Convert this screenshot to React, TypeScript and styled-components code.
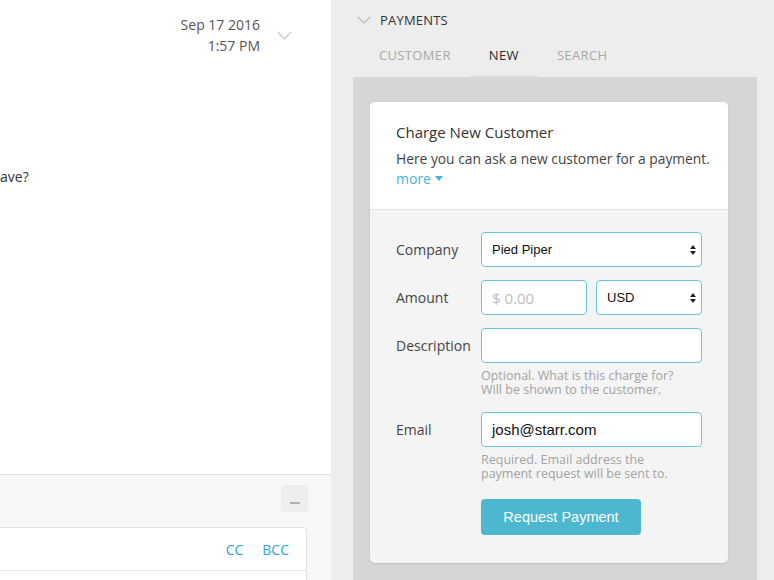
import styled, { createGlobalStyle } from 'styled-components';

const GlobalStyle = createGlobalStyle`
  html, body {
    margin: 0;
    padding: 0;
  }
  body {
    font-family: 'Open Sans', 'Liberation Sans', sans-serif;
    background: #ededed;
    overflow: hidden;
  }
  * {
    box-sizing: border-box;
  }
`;

const uiFont = `'Liberation Sans', Arial, sans-serif`;

const Page = styled.div`
  display: flex;
  width: 774px;
  height: 580px;
  overflow: hidden;
`;

/* ---------- left: conversation ---------- */

const LeftPane = styled.div`
  width: 331px;
  flex-shrink: 0;
  display: flex;
  flex-direction: column;
  background: #ffffff;
`;

const MessageHeader = styled.div`
  display: flex;
  justify-content: flex-end;
  align-items: center;
  gap: 17px;
  padding: 14px 39px 0 0;
`;

const DateText = styled.div`
  text-align: right;
  font-size: 14px;
  line-height: 21px;
  color: #555;
`;

const MessageBody = styled.div`
  flex: 1;
  padding-top: 111px;
  font-size: 14px;
  line-height: 20px;
  color: #333;
`;

const Composer = styled.div`
  height: 106px;
  border-top: 1px solid #e3e3e3;
  background: #f7f7f7;
  display: flex;
  flex-direction: column;
`;

const ComposerTools = styled.div`
  display: flex;
  justify-content: flex-end;
  padding: 10px 23px 0 0;
`;

const MinimizeButton = styled.button`
  width: 27px;
  height: 27px;
  border: none;
  border-radius: 4px;
  background: #eeeeee;
  display: flex;
  align-items: flex-end;
  justify-content: center;
  padding: 0 0 8px;
  &::after {
    content: '';
    width: 10px;
    height: 2px;
    background: #b3b3b3;
  }
`;

const RecipientBox = styled.div`
  margin: 15px 24px 0 0;
  flex: 1;
  background: #ffffff;
  border: 1px solid #e2e2e2;
  border-left: none;
  border-bottom: none;
  border-radius: 0 4px 0 0;
`;

const RecipientRow = styled.div`
  height: 43px;
  display: flex;
  justify-content: flex-end;
  align-items: center;
  gap: 19px;
  padding-right: 17px;
  border-bottom: 1px solid #e6e6e6;
`;

const LinkText = styled.span`
  font-size: 14px;
  color: #2ba4dd;
`;

/* ---------- right: payments ---------- */

const RightPane = styled.div`
  flex: 1;
  display: flex;
  flex-direction: column;
  background: #ededed;
`;

const SectionHeader = styled.div`
  height: 40px;
  flex-shrink: 0;
  display: flex;
  align-items: center;
  gap: 9px;
  padding-left: 26px;
  font-size: 13px;
  color: #333;
  letter-spacing: 0.2px;
`;

const Tabs = styled.div`
  display: flex;
  flex-shrink: 0;
  padding-left: 29px;
`;

const Tab = styled.div<{ $active?: boolean }>`
  padding: 6px 19px 11px;
  line-height: 18px;
  font-size: 13px;
  letter-spacing: 0.35px;
  text-transform: uppercase;
  color: ${(p) => (p.$active ? '#2b2b2b' : '#a9a9a9')};
  border-bottom: 2px solid ${(p) => (p.$active ? '#e3e3e3' : 'transparent')};
`;

const Panel = styled.div`
  flex: 1;
  margin: 0 17px 0 22px;
  padding: 25px 0 0 17px;
  background: #d6d6d6;
`;

const Card = styled.div`
  width: 358px;
  border-radius: 5px;
  overflow: hidden;
  background: #f4f4f4;
  box-shadow: 0 1px 2px rgba(0, 0, 0, 0.12);
`;

const CardHeader = styled.div`
  background: #ffffff;
  padding: 19px 20px 21px 26px;
  border-bottom: 1px solid #e2e2e2;
`;

const CardTitle = styled.div`
  font-size: 15px;
  line-height: 22px;
  color: #333;
`;

const CardText = styled.div`
  margin-top: 6px;
  font-size: 13.8px;
  line-height: 20px;
  color: #444;
  white-space: nowrap;
`;

const MoreLink = styled.div`
  display: flex;
  align-items: center;
  gap: 4px;
  font-size: 14px;
  line-height: 19px;
  color: #45b4d4;
`;

const Form = styled.div`
  padding: 22px 26px 28px;
  display: flex;
  flex-direction: column;
`;

const Row = styled.div<{ $gap?: number }>`
  display: flex;
  align-items: flex-start;
  margin-bottom: ${(p) => p.$gap ?? 13}px;
`;

const Label = styled.div`
  width: 85px;
  flex-shrink: 0;
  height: 35px;
  line-height: 35px;
  font-size: 14px;
  color: #444;
`;

const Control = styled.div`
  width: 221px;
  display: flex;
  flex-direction: column;
`;

const Pair = styled.div`
  display: flex;
  gap: 9px;
`;

const InputBox = styled.div<{ $width?: number }>`
  position: relative;
  width: ${(p) => (p.$width ? `${p.$width}px` : '100%')};
  height: 35px;
  border: 1px solid #6cc5de;
  border-radius: 4px;
  background: #ffffff;
  display: flex;
  align-items: center;
  padding: 0 10px;
`;

const Value = styled.span<{ $size?: number }>`
  font-family: ${uiFont};
  font-size: ${(p) => p.$size ?? 13}px;
  color: #111;
`;

const Placeholder = styled.span`
  font-size: 15px;
  color: #bdbdbd;
`;

const SelectArrows = styled.svg`
  position: absolute;
  right: 5px;
  top: 12px;
`;

const Help = styled.div`
  margin-top: 6px;
  padding-bottom: 2px;
  font-size: 12.5px;
  line-height: 14px;
  color: #a3a3a3;
`;

const SubmitButton = styled.button`
  margin-left: 85px;
  width: 160px;
  height: 36px;
  border: none;
  border-radius: 4px;
  background: #4db7d0;
  color: #ffffff;
  font-family: ${uiFont};
  font-size: 14.5px;
  font-weight: 500;
`;

const Chevron = ({ color, w, h }: { color: string; w: number; h: number }) => (
  <svg width={w} height={h} viewBox={`0 0 ${w} ${h}`}>
    <polyline
      points={`1,1 ${w / 2},${h - 1} ${w - 1},1`}
      fill="none"
      stroke={color}
      strokeWidth="1.4"
    />
  </svg>
);

const Arrows = () => (
  <SelectArrows width="6" height="10" viewBox="0 0 6 10">
    <polygon points="3,0 6,4 0,4" fill="#222" />
    <polygon points="0,6 6,6 3,10" fill="#222" />
  </SelectArrows>
);

const App = () => {
  return (
    <Page>
      <GlobalStyle />
      <LeftPane>
        <MessageHeader>
          <DateText>
            Sep 17 2016
            <br />
            1:57 PM
          </DateText>
          <Chevron color="#cfcfcf" w={15} h={9} />
        </MessageHeader>
        <MessageBody>ave?</MessageBody>
        <Composer>
          <ComposerTools>
            <MinimizeButton />
          </ComposerTools>
          <RecipientBox>
            <RecipientRow>
              <LinkText>CC</LinkText>
              <LinkText>BCC</LinkText>
            </RecipientRow>
          </RecipientBox>
        </Composer>
      </LeftPane>

      <RightPane>
        <SectionHeader>
          <Chevron color="#bdbdbd" w={14} h={8} />
          PAYMENTS
        </SectionHeader>
        <Tabs>
          <Tab>Customer</Tab>
          <Tab $active>New</Tab>
          <Tab>Search</Tab>
        </Tabs>
        <Panel>
          <Card>
            <CardHeader>
              <CardTitle>Charge New Customer</CardTitle>
              <CardText>Here you can ask a new customer for a payment.</CardText>
              <MoreLink>
                more
                <svg width="8" height="5" viewBox="0 0 8 5">
                  <polygon points="0,0 8,0 4,5" fill="#45b4d4" />
                </svg>
              </MoreLink>
            </CardHeader>
            <Form>
              <Row>
                <Label>Company</Label>
                <Control>
                  <InputBox>
                    <Value>Pied Piper</Value>
                    <Arrows />
                  </InputBox>
                </Control>
              </Row>
              <Row>
                <Label>Amount</Label>
                <Control>
                  <Pair>
                    <InputBox $width={106}>
                      <Placeholder>$ 0.00</Placeholder>
                    </InputBox>
                    <InputBox $width={106}>
                      <Value>USD</Value>
                      <Arrows />
                    </InputBox>
                  </Pair>
                </Control>
              </Row>
              <Row>
                <Label>Description</Label>
                <Control>
                  <InputBox />
                  <Help>
                    Optional. What is this charge for?
                    <br />
                    Will be shown to the customer.
                  </Help>
                </Control>
              </Row>
              <Row $gap={16}>
                <Label>Email</Label>
                <Control>
                  <InputBox>
                    <Value $size={15}>josh@starr.com</Value>
                  </InputBox>
                  <Help>
                    Required. Email address the
                    <br />
                    payment request will be sent to.
                  </Help>
                </Control>
              </Row>
              <SubmitButton>Request Payment</SubmitButton>
            </Form>
          </Card>
        </Panel>
      </RightPane>
    </Page>
  );
};

export default App;
